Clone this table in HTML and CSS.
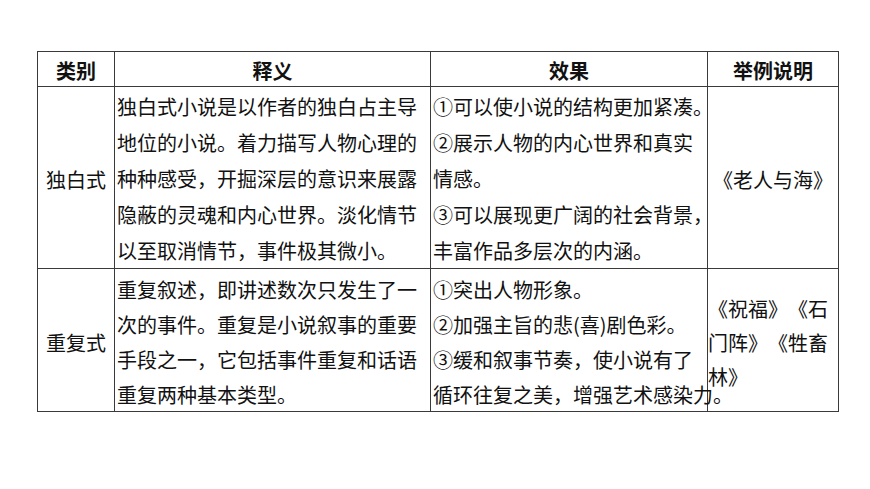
FILE: index.html
```html
<!DOCTYPE html>
<html lang="zh-CN">
<head>
<meta charset="utf-8">
<title>独白式与重复式</title>
<link rel="stylesheet" href="styles.css">
</head>
<body>
<div class="table">
  <div class="cell head">类别</div>
  <div class="cell head">释义</div>
  <div class="cell head">效果</div>
  <div class="cell head">举例说明</div>

  <div class="cell type">独白式</div>
  <div class="cell text r1">独白式小说是以作者的独白占主导<br>地位的小说。着力描写人物心理的<br>种种感受，开掘深层的意识来展露<br>隐蔽的灵魂和内心世界。淡化情节<br>以至取消情节，事件极其微小。</div>
  <div class="cell text r1">①可以使小说的结构更加紧凑。<br>②展示人物的内心世界和真实<br>情感。<br>③可以展现更广阔的社会背景，<br>丰富作品多层次的内涵。</div>
  <div class="cell example">《老人与海》</div>

  <div class="cell type">重复式</div>
  <div class="cell text r2">重复叙述，即讲述数次只发生了一<br>次的事件。重复是小说叙事的重要<br>手段之一，它包括事件重复和话语<br>重复两种基本类型。</div>
  <div class="cell text r2">①突出人物形象。<br>②加强主旨的悲(喜)剧色彩。<br>③缓和叙事节奏，使小说有了<br>循环往复之美，增强艺术感染力。</div>
  <div class="cell example left">《祝福》《石<br>门阵》《牲畜<br>林》</div>
</div>
</body>
</html>
```

FILE: styles.css
```css
html, body {
  margin: 0;
  padding: 0;
  background: #ffffff;
}

body {
  padding: 51px 0 0 37px;
  font-family: "Noto Sans CJK SC", "Noto Sans", sans-serif;
  color: #111111;
  font-size: 20px;
  text-spacing-trim: space-all;
}

.table {
  display: grid;
  grid-template-columns: 77px 316px 277px 131px;
  grid-template-rows: 35px 182px 143px;
  width: max-content;
  border-top: 1px solid #3a3a3a;
  border-left: 1px solid #3a3a3a;
}

.cell {
  box-sizing: border-box;
  border-right: 1px solid #3a3a3a;
  border-bottom: 1px solid #3a3a3a;
  white-space: nowrap;
  overflow: visible;
  min-width: 0;
}

.head {
  display: flex;
  align-items: center;
  justify-content: center;
  font-weight: 700;
  line-height: 1;
  padding-top: 3px;
}

.type {
  display: flex;
  align-items: center;
  justify-content: center;
  padding-top: 4px;
}

.text {
  padding-left: 2px;
}

.r1 {
  line-height: 36px;
  padding-top: 2px;
}

.r2 {
  line-height: 35px;
  padding-top: 3px;
}

.example {
  display: flex;
  align-items: center;
  justify-content: center;
  line-height: 34px;
  padding-top: 5px;
}

.example.left {
  justify-content: flex-start;
  padding-left: 0;
}
```
